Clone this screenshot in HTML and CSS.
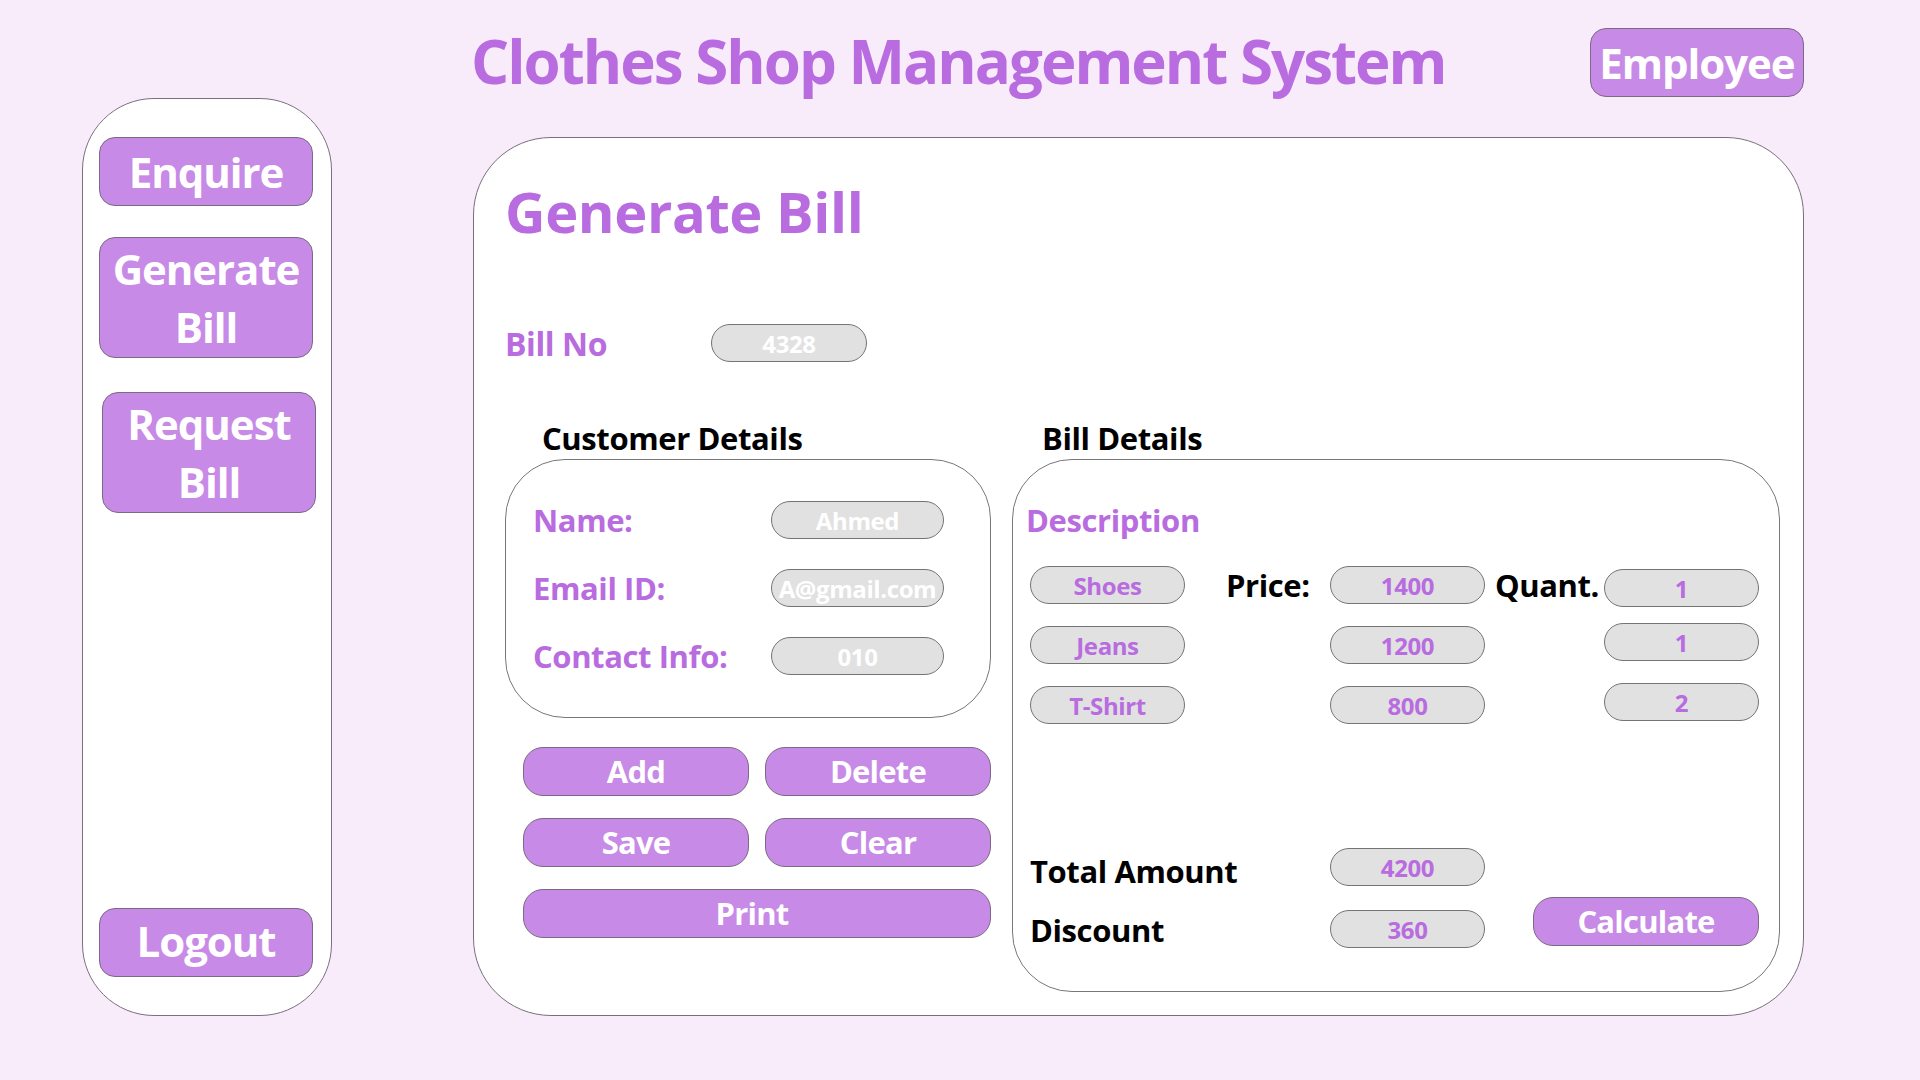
FILE: index.html
```html
<!DOCTYPE html>
<html lang="en">
<head>
<meta charset="utf-8">
<title>Clothes Shop Management System</title>
<link rel="stylesheet" href="styles.css">
</head>
<body>
<div class="app">
  <aside class="sidebar">
    <button class="nav-btn">Enquire</button>
    <button class="nav-btn tall">Generate<br>Bill</button>
    <button class="nav-btn tall request">Request<br>Bill</button>
    <button class="nav-btn logout">Logout</button>
  </aside>
  <div class="content">
    <header class="topbar">
      <h1 class="title">Clothes Shop Management System</h1>
      <button class="nav-btn employee">Employee</button>
    </header>
    <main class="panel">
      <h2 class="panel-title">Generate Bill</h2>
      <div class="billno-row">
        <span class="billno-label">Bill No</span>
        <div class="pill pill-light billno-pill">4328</div>
      </div>
      <div class="sections">
        <section class="customer">
          <h3 class="section-title">Customer Details</h3>
          <div class="box customer-box">
            <span class="field-label">Name:</span>
            <div class="pill pill-light cust-pill">Ahmed</div>
            <span class="field-label">Email ID:</span>
            <div class="pill pill-light cust-pill">A@gmail.com</div>
            <span class="field-label">Contact Info:</span>
            <div class="pill pill-light cust-pill">010</div>
          </div>
          <div class="actions">
            <button class="act-btn">Add</button>
            <button class="act-btn delete">Delete</button>
            <button class="act-btn">Save</button>
            <button class="act-btn">Clear</button>
            <button class="act-btn print">Print</button>
          </div>
        </section>
        <section class="bill">
          <h3 class="section-title">Bill Details</h3>
          <div class="box bill-box">
            <div class="desc">Description</div>
            <div class="items">
              <div class="pill pill-purple">Shoes</div>
              <span class="dark-label price-label">Price:</span>
              <div class="pill pill-purple">1400</div>
              <span class="dark-label quant-label">Quant.</span>
              <div class="pill pill-purple q1">1</div>

              <div class="pill pill-purple">Jeans</div>
              <span></span>
              <div class="pill pill-purple">1200</div>
              <span></span>
              <div class="pill pill-purple q2">1</div>

              <div class="pill pill-purple">T-Shirt</div>
              <span></span>
              <div class="pill pill-purple">800</div>
              <span></span>
              <div class="pill pill-purple q3">2</div>
            </div>
            <div class="totals">
              <span class="dark-label total-label">Total Amount</span>
              <div class="pill pill-purple">4200</div>
              <span class="dark-label discount-label">Discount</span>
              <div class="pill pill-purple discount-pill">360</div>
              <button class="act-btn calc">Calculate</button>
            </div>
          </div>
        </section>
      </div>
    </main>
  </div>
</div>
</body>
</html>
```
FILE: styles.css
```css
html, body {
  margin: 0;
  padding: 0;
}

body {
  background: #f8ecfb;
  font-family: "Open Sans", "Noto Sans", sans-serif;
  font-weight: 700;
  letter-spacing: -0.025em;
  color: #000;
}

.app {
  display: flex;
  gap: 141px;
  padding-left: 82px;
  height: 1080px;
  box-sizing: border-box;
}

/* ---------- Sidebar ---------- */
.sidebar {
  width: 250px;
  height: 918px;
  margin-top: 98px;
  box-sizing: border-box;
  background: #ffffff;
  border: 1px solid #7a7080;
  border-radius: 72px;
  padding: 38px 0 38px 16px;
  display: flex;
  flex-direction: column;
  align-items: flex-start;
  gap: 31px;
}

.nav-btn {
  width: 214px;
  height: 69px;
  box-sizing: border-box;
  padding: 0;
  margin: 0;
  background: #c78ae6;
  border: 1px solid #7b6b82;
  border-radius: 16px;
  color: #ffffff;
  font-family: inherit;
  font-weight: 700;
  letter-spacing: -0.025em;
  font-size: 42px;
  line-height: 58px;
  text-align: center;
  display: flex;
  align-items: center;
  justify-content: center;
}

.nav-btn.tall {
  height: 121px;
}

.nav-btn.request {
  margin-top: 3px;
  margin-left: 3px;
}

.nav-btn.logout {
  margin-top: auto;
  padding-bottom: 4px;
}

/* ---------- Content ---------- */
.content {
  width: 1331px;
  display: flex;
  flex-direction: column;
}

.topbar {
  height: 137px;
  box-sizing: border-box;
  padding-top: 28px;
  display: flex;
  justify-content: space-between;
  align-items: flex-start;
}

.title {
  margin: -2px 0 0 -2px;
  font-size: 60px;
  line-height: 70px;
  font-weight: 700;
  letter-spacing: -0.033em;
  color: #b86ce0;
}

.panel {
  height: 879px;
  box-sizing: border-box;
  background: #ffffff;
  border: 1px solid #77707a;
  border-radius: 78px;
  padding: 43px 23px 23px 31px;
  display: flex;
  flex-direction: column;
}

.panel-title {
  margin: 0;
  font-size: 56px;
  line-height: 60px;
  font-weight: 700;
  color: #b86ce0;
}

.billno-row {
  margin-top: 83px;
  height: 38px;
  display: flex;
  align-items: center;
}

.billno-label {
  width: 206px;
  font-size: 32px;
  color: #b86ce0;
}

/* ---------- Pills ---------- */
.pill {
  width: 155px;
  height: 38px;
  box-sizing: border-box;
  background: #e1e1e1;
  border: 1px solid #747474;
  border-radius: 19px;
  display: flex;
  align-items: center;
  justify-content: center;
  font-size: 24px;
  white-space: nowrap;
}

.pill-light {
  color: #ffffff;
}

.pill-purple {
  color: #b86ce0;
}

.billno-pill {
  width: 156px;
}

.cust-pill {
  width: 173px;
}

/* ---------- Sections ---------- */
.sections {
  margin-top: 56px;
  display: flex;
  gap: 21px;
}

.customer {
  width: 486px;
}

.bill {
  width: 768px;
}

.section-title {
  margin: 0 0 1px;
  font-size: 31px;
  line-height: 40px;
  font-weight: 700;
  color: #000;
}

.customer .section-title {
  padding-left: 37px;
}

.bill .section-title {
  padding-left: 30px;
}

.box {
  background: #ffffff;
  border: 1px solid #777777;
  box-sizing: border-box;
}

.customer-box {
  border-radius: 60px;
  padding: 41px 0 42px 27px;
  display: grid;
  grid-template-columns: 238px 173px;
  grid-auto-rows: 38px;
  row-gap: 30px;
  align-items: center;
}

.field-label {
  font-size: 31px;
  color: #b86ce0;
}

.actions {
  margin-top: 29px;
  padding-left: 18px;
  display: grid;
  grid-template-columns: 226px 226px;
  column-gap: 16px;
  row-gap: 22px;
}

.act-btn {
  height: 49px;
  box-sizing: border-box;
  padding: 0;
  margin: 0;
  background: #c78ae6;
  border: 1px solid #7b6b82;
  border-radius: 20px;
  color: #ffffff;
  font-family: inherit;
  font-weight: 700;
  letter-spacing: -0.025em;
  font-size: 31px;
  line-height: 47px;
  text-align: center;
}

.act-btn.print {
  grid-column: 1 / span 2;
  padding-right: 10px;
}

/* ---------- Bill box ---------- */
.bill-box {
  border-radius: 60px;
  padding: 41px 0 43px 13px;
}

.desc {
  height: 38px;
  line-height: 38px;
  font-size: 31px;
  color: #b86ce0;
}

.items {
  margin-top: 27px;
  margin-left: 4px;
  display: grid;
  grid-template-columns: 155px 145px 155px 119px 155px;
  grid-template-rows: repeat(3, 38px);
  row-gap: 22px;
  align-items: center;
}

.dark-label {
  font-size: 31px;
  color: #000;
  white-space: nowrap;
}

.price-label {
  padding-left: 41px;
}

.quant-label {
  padding-left: 10px;
}

.q1 {
  transform: translateY(3px);
}

.q2,
.q3 {
  transform: translateY(-3px);
}

.totals {
  margin-top: 124px;
  margin-left: 4px;
  display: grid;
  grid-template-columns: 300px 155px 274px;
  grid-template-rows: 38px 38px;
  row-gap: 24px;
  align-items: center;
}

.total-label {
  grid-column: 1;
  grid-row: 1;
  padding-top: 8px;
}

.discount-label {
  grid-column: 1;
  grid-row: 2;
  padding-top: 2px;
}

.discount-pill {
  grid-column: 2;
  grid-row: 2;
}

.act-btn.calc {
  grid-column: 3;
  grid-row: 1 / span 2;
  align-self: end;
  width: 226px;
  margin: 0 0 2px 48px;
}
```
